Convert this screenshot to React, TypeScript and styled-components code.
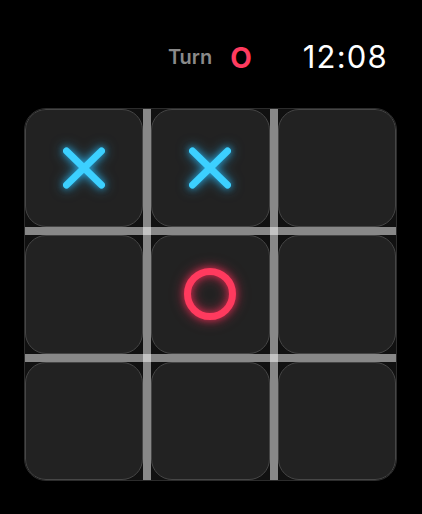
import React from 'react';
import styled, { createGlobalStyle } from 'styled-components';

const GlobalStyle = createGlobalStyle`
  html, body {
    margin: 0;
    padding: 0;
    background: #000;
  }
  body {
    font-family: Inter, "Noto Sans", "Liberation Sans", sans-serif;
    -webkit-font-smoothing: antialiased;
  }
`;

const Screen = styled.div`
  width: 422px;
  height: 514px;
  background: #000;
  box-sizing: border-box;
  padding: 0 25px 0 24px;
  display: flex;
  flex-direction: column;
`;

const Header = styled.header`
  height: 108px;
  box-sizing: border-box;
  padding: 41px 10px 0 0;
  display: flex;
  justify-content: flex-end;
  align-items: flex-start;
`;

const TurnGroup = styled.div`
  height: 31px;
  display: flex;
  align-items: center;
  gap: 18px;
  margin-right: 51px;
`;

const TurnLabel = styled.span`
  font-size: 20px;
  font-weight: 600;
  color: #8a8a8a;
  line-height: 1;
  padding-top: 1px;
`;

const TurnMark = styled.span`
  font-size: 28px;
  font-weight: 700;
  color: #ff3b5f;
  line-height: 1;
  padding-top: 3px;
`;

const Clock = styled.span`
  font-size: 31px;
  font-weight: 400;
  color: #fff;
  line-height: 1;
  letter-spacing: 1.2px;
  margin-right: -1px;
`;

const Board = styled.div`
  width: 373px;
  height: 373px;
  box-sizing: border-box;
  border: 1px solid #2c2c2c;
  border-radius: 22px;
  background: #111;
  overflow: hidden;
  display: grid;
  grid-template-columns: 1fr 8px 1fr 8px 1fr;
  grid-template-rows: 1fr 8px 1fr 8px 1fr;
`;

const Cell = styled.div<{ $col: number; $row: number }>`
  grid-column: ${({ $col }) => $col * 2 + 1};
  grid-row: ${({ $row }) => $row * 2 + 1};
  background: #222;
  border: 1.5px solid #464646;
  border-radius: 21px;
  display: flex;
  align-items: center;
  justify-content: center;
`;

const Line = styled.div<{ $vertical?: boolean; $index: number }>`
  background: rgba(255, 255, 255, 0.5);
  grid-column: ${({ $vertical, $index }) => ($vertical ? $index * 2 : '1 / -1')};
  grid-row: ${({ $vertical, $index }) => ($vertical ? '1 / -1' : $index * 2)};
`;

const Glyph = styled.svg<{ $glow: string }>`
  overflow: visible;
  filter: drop-shadow(0 0 3px ${({ $glow }) => $glow}) drop-shadow(0 0 6px ${({ $glow }) => $glow});
`;

const CrossMark = () => (
  <Glyph $glow="rgba(40, 190, 255, 0.6)" width="42" height="42" viewBox="0 0 42 42">
    <g stroke="#3cd0ff" strokeWidth="7" strokeLinecap="round">
      <line x1="3.5" y1="4" x2="38.5" y2="38" />
      <line x1="38.5" y1="4" x2="3.5" y2="38" />
    </g>
  </Glyph>
);

const RingMark = () => (
  <Glyph $glow="rgba(255, 45, 90, 0.6)" width="52" height="52" viewBox="0 0 52 52">
    <circle cx="26" cy="26" r="22.5" fill="none" stroke="#ff3a5e" strokeWidth="7" />
  </Glyph>
);

type Mark = 'X' | 'O' | null;

const board: Mark[] = ['X', 'X', null, null, 'O', null, null, null, null];

export default function App() {
  return (
    <>
      <GlobalStyle />
      <Screen>
        <Header>
          <TurnGroup>
            <TurnLabel>Turn</TurnLabel>
            <TurnMark>O</TurnMark>
          </TurnGroup>
          <Clock>12:08</Clock>
        </Header>
        <Board>
          {board.map((mark, i) => (
            <Cell key={i} $col={i % 3} $row={Math.floor(i / 3)}>
              {mark === 'X' && <CrossMark />}
              {mark === 'O' && <RingMark />}
            </Cell>
          ))}
          <Line $vertical $index={1} />
          <Line $vertical $index={2} />
          <Line $index={1} />
          <Line $index={2} />
        </Board>
      </Screen>
    </>
  );
}
